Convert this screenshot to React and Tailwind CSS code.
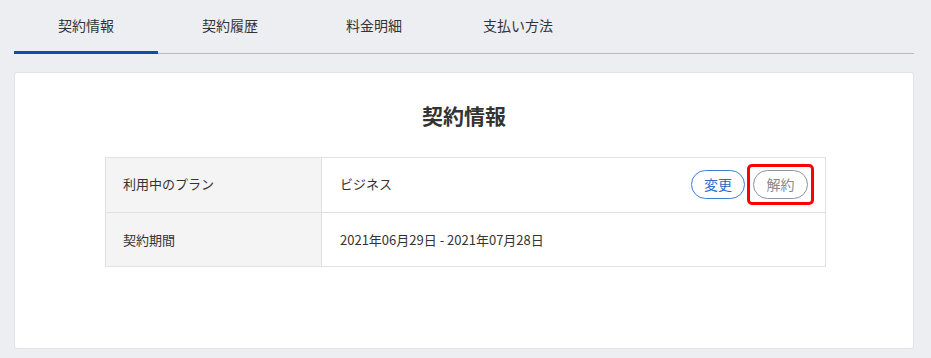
import React from "react";

export default function App() {
  const tabs = ["契約情報", "契約履歴", "料金明細", "支払い方法"];
  return (
    <div
      className="w-[931px] h-[358px] bg-[#edeef2] px-[14px] pt-[11px] text-[#333]"
      style={{ fontFamily: '"Noto Sans CJK JP", "Noto Sans", sans-serif' }}
    >
      <div className="flex border-b border-[#b9bbc0] w-[900px] h-[43px]">
        {tabs.map((t, i) => (
          <div
            key={t}
            className={`w-[144px] flex items-start justify-center pt-[4px] text-[14px] ${
              i === 0 ? "border-b-[3px] border-[#0a4fa8] -mb-px" : ""
            }`}
          >
            {t}
          </div>
        ))}
      </div>
      <div className="mt-[18px] w-[900px] h-[277px] bg-white border border-[#e2e3e6] rounded-[3px] flex flex-col">
        <h1 className="mt-[26px] text-center text-[21px] font-bold leading-[32px]">契約情報</h1>
        <div className="mt-[26px] ml-[90px] w-[721px] border border-[#e1e1e1] text-[13px]">
          <div className="flex h-[55px] border-b border-[#e1e1e1]">
            <div className="w-[216px] bg-[#f4f4f4] border-r border-[#e1e1e1] flex items-center pl-[17px] pb-[2px]">
              利用中のプラン
            </div>
            <div className="flex-1 flex items-center pl-[18px] pr-[11px] pb-[2px]">
              <span className="flex-1">ビジネス</span>
              <button className="w-[54px] h-[29px] rounded-full border border-[#3b7dd8] text-[#2b6cc8] text-[14px] flex items-center justify-center">
                変更
              </button>
              <div className="ml-[2px] border-[3px] border-[#ff0000] rounded-[5px] px-[3px] py-[3px]">
                <button className="w-[55px] h-[29px] rounded-full border border-[#8d919c] text-[#8a8a8a] text-[14px] flex items-center justify-center">
                  解約
                </button>
              </div>
            </div>
          </div>
          <div className="flex h-[53px]">
            <div className="w-[216px] bg-[#f4f4f4] border-r border-[#e1e1e1] flex items-center pl-[17px]">
              契約期間
            </div>
            <div className="flex-1 flex items-center pl-[18px]">
              2021年06月29日 - 2021年07月28日
            </div>
          </div>
        </div>
      </div>
    </div>
  );
}
